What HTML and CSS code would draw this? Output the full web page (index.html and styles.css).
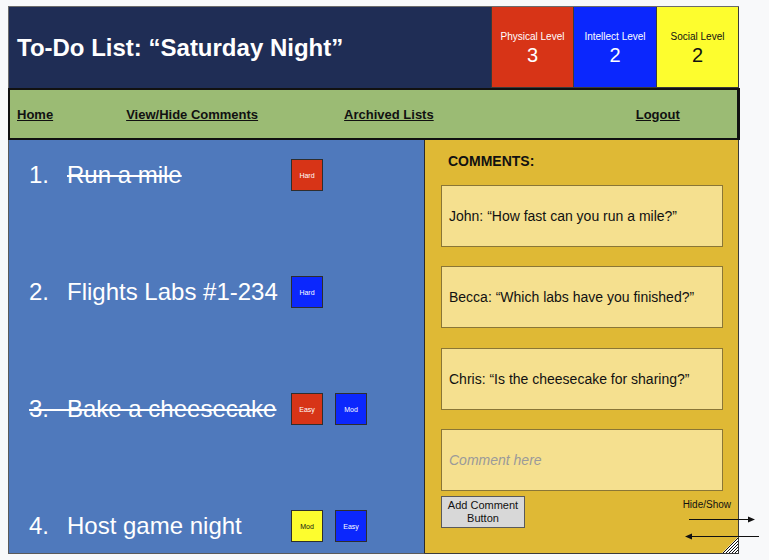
FILE: index.html
```html
<!DOCTYPE html>
<html lang="en">
<head>
<meta charset="utf-8">
<title>To-Do List</title>
<link rel="stylesheet" href="styles.css">
</head>
<body>
<div class="page">
  <header class="top">
    <h1 class="title">To-Do List: “Saturday Night”</h1>
    <div class="levels">
      <div class="level physical"><span class="lvl-label">Physical Level</span><span class="lvl-num">3</span></div>
      <div class="level intellect"><span class="lvl-label">Intellect Level</span><span class="lvl-num">2</span></div>
      <div class="level social"><span class="lvl-label">Social Level</span><span class="lvl-num">2</span></div>
    </div>
  </header>
  <nav class="nav">
    <a class="nav-link home" href="#">Home</a>
    <a class="nav-link view" href="#">View/Hide Comments</a>
    <a class="nav-link archived" href="#">Archived Lists</a>
    <a class="nav-link logout" href="#">Logout</a>
  </nav>
  <main class="main">
    <section class="tasks">
      <div class="task">
        <span class="task-text"><span class="num">1. </span><span class="struck">Run a mile</span></span>
        <div class="badges"><span class="badge red">Hard</span></div>
      </div>
      <div class="task">
        <span class="task-text"><span class="num">2. </span><span>Flights Labs #1-234</span></span>
        <div class="badges"><span class="badge blue">Hard</span></div>
      </div>
      <div class="task">
        <span class="task-text struck"><span class="num">3. </span><span>Bake a cheesecake</span></span>
        <div class="badges"><span class="badge red">Easy</span><span class="badge blue">Mod</span></div>
      </div>
      <div class="task">
        <span class="task-text"><span class="num">4. </span><span>Host game night</span></span>
        <div class="badges"><span class="badge yellow">Mod</span><span class="badge blue">Easy</span></div>
      </div>
    </section>
    <aside class="comments">
      <h2 class="comments-title">COMMENTS:</h2>
      <div class="comment-list">
        <div class="comment">John: “How fast can you run a mile?”</div>
        <div class="comment">Becca: “Which labs have you finished?”</div>
        <div class="comment">Chris: “Is the cheesecake for sharing?”</div>
        <div class="comment comment-input">Comment here</div>
      </div>
      <div class="actions">
        <button class="add-btn" type="button">Add Comment<br>Button</button>
        <span class="hide-show">Hide/Show</span>
      </div>
      <svg class="arrows" width="85" height="35" viewBox="0 0 85 35">
        <line x1="9" y1="9.5" x2="69" y2="9.5" stroke="#111" stroke-width="1"/>
        <polygon points="68,6.5 75,9.5 68,12.5" fill="#111"/>
        <line x1="11" y1="26.5" x2="79" y2="26.5" stroke="#111" stroke-width="1"/>
        <polygon points="12,23.5 5,26.5 12,29.5" fill="#111"/>
      </svg>
      <svg class="resize" width="16" height="16" viewBox="0 0 16 16">
        <defs>
          <clipPath id="tri"><polygon points="16,0 16,16 0,16"/></clipPath>
        </defs>
        <g clip-path="url(#tri)">
          <rect x="0" y="0" width="16" height="16" fill="#fff"/>
          <g stroke="#111" stroke-width="1">
            <line x1="16" y1="1" x2="1" y2="16"/>
            <line x1="16" y1="4" x2="4" y2="16"/>
            <line x1="16" y1="7" x2="7" y2="16"/>
            <line x1="16" y1="10" x2="10" y2="16"/>
            <line x1="16" y1="13" x2="13" y2="16"/>
          </g>
        </g>
      </svg>
    </aside>
  </main>
</div>
</body>
</html>
```
FILE: styles.css
```css
* { box-sizing: border-box; }

html, body {
  margin: 0;
  padding: 0;
  background: #f8f9fa;
}

body {
  font-family: "Liberation Sans", Arial, sans-serif;
  padding: 6px 0 0 8px;
}

.page {
  width: 731px;
}

/* Header */
.top {
  display: flex;
  height: 82px;
  background: #1f2d55;
  border-top: 1px solid #6b6b6b;
  border-left: 1px solid #6b6b6b;
}

.title {
  flex: 1;
  margin: 0;
  padding-left: 8px;
  display: flex;
  align-items: center;
  color: #fff;
  font-size: 24px;
  font-weight: bold;
  line-height: 28px;
}

.levels {
  display: flex;
}

.level {
  width: 83px;
  display: flex;
  flex-direction: column;
  align-items: center;
  justify-content: center;
  padding-top: 3px;
  border: 1px solid #3a3a3a;
  border-top: 0;
  border-right: 0;
}

.level.physical { width: 82px; background: #d73417; color: #fff; }
.level.intellect { background: #0b27fd; color: #fff; }
.level.social { background: #fdfd2e; color: #111; border-right: 1px solid #3a3a3a; }

.lvl-label {
  font-size: 10px;
  line-height: 12px;
}

.lvl-num {
  font-size: 20px;
  line-height: 24px;
}

/* Nav */
.nav {
  display: flex;
  align-items: center;
  width: 732px;
  height: 52px;
  background: #9bbb74;
  border: 2px solid #111;
  border-right-width: 3px;
}

.nav-link {
  color: #111;
  font-size: 13px;
  font-weight: bold;
  text-decoration: underline;
}

.nav-link.home { margin-left: 7px; }
.nav-link.view { margin-left: 73px; }
.nav-link.archived { margin-left: 86px; }
.nav-link.logout { margin-left: 202px; }

/* Main */
.main {
  display: flex;
  height: 414px;
}

.tasks {
  width: 417px;
  background: #4f79bc;
  border-left: 1px solid #5a5a5a;
  border-bottom: 1px solid #5a5a5a;
  border-right: 1px solid #2a2a2a;
  padding: 19px 0 0 20px;
  display: flex;
  flex-direction: column;
  gap: 85px;
}

.task {
  display: grid;
  grid-template-columns: 262px auto;
  align-items: center;
  height: 32px;
}

.task-text {
  color: #fff;
  font-size: 24px;
  line-height: 32px;
  white-space: nowrap;
}

.num {
  word-spacing: 11.3px;
}

.struck {
  text-decoration: line-through;
  text-decoration-thickness: 2px;
}

.badges {
  display: flex;
  gap: 12px;
}

.badge {
  width: 32px;
  height: 32px;
  display: flex;
  align-items: center;
  justify-content: center;
  font-size: 7px;
  border: 1px solid #2e2e2e;
  color: #fff;
}

.badge.red { background: #d73417; }
.badge.blue { background: #0b27fd; }
.badge.yellow { background: #fdfd2e; color: #111; }

/* Comments */
.comments {
  position: relative;
  width: 314px;
  background: #dfb935;
  border-right: 1px solid #3a3a3a;
  border-bottom: 1px solid #3a3a3a;
  padding: 13px 15px 0 16px;
}

.comments-title {
  margin: 0 0 16px 7px;
  font-size: 14px;
  line-height: 16px;
  font-weight: bold;
  color: #111;
}

.comment-list {
  display: flex;
  flex-direction: column;
  gap: 19.3px;
}

.comment {
  height: 62px;
  display: flex;
  align-items: center;
  padding-left: 7px;
  background: #f5e08f;
  border: 1px solid #8a7636;
  font-size: 14px;
  color: #111;
  white-space: nowrap;
}

.comment-input {
  color: #9a9a9a;
  font-style: italic;
  font-size: 14px;
}

.actions {
  display: flex;
  justify-content: space-between;
  align-items: flex-start;
  margin-top: 5px;
  margin-right: -8px;
}

.add-btn {
  width: 84px;
  height: 32px;
  padding: 0;
  background: #d8d8d8;
  border: 1px solid #5a5a5a;
  border-radius: 0;
  font-family: "Liberation Sans", Arial, sans-serif;
  font-size: 11px;
  line-height: 12.5px;
  color: #111;
}

.hide-show {
  margin-top: 3px;
  font-size: 10px;
  line-height: 12px;
  color: #111;
}

.arrows {
  position: absolute;
  left: 255px;
  top: 370px;
}

.resize {
  position: absolute;
  right: 0;
  bottom: 0;
}
```
